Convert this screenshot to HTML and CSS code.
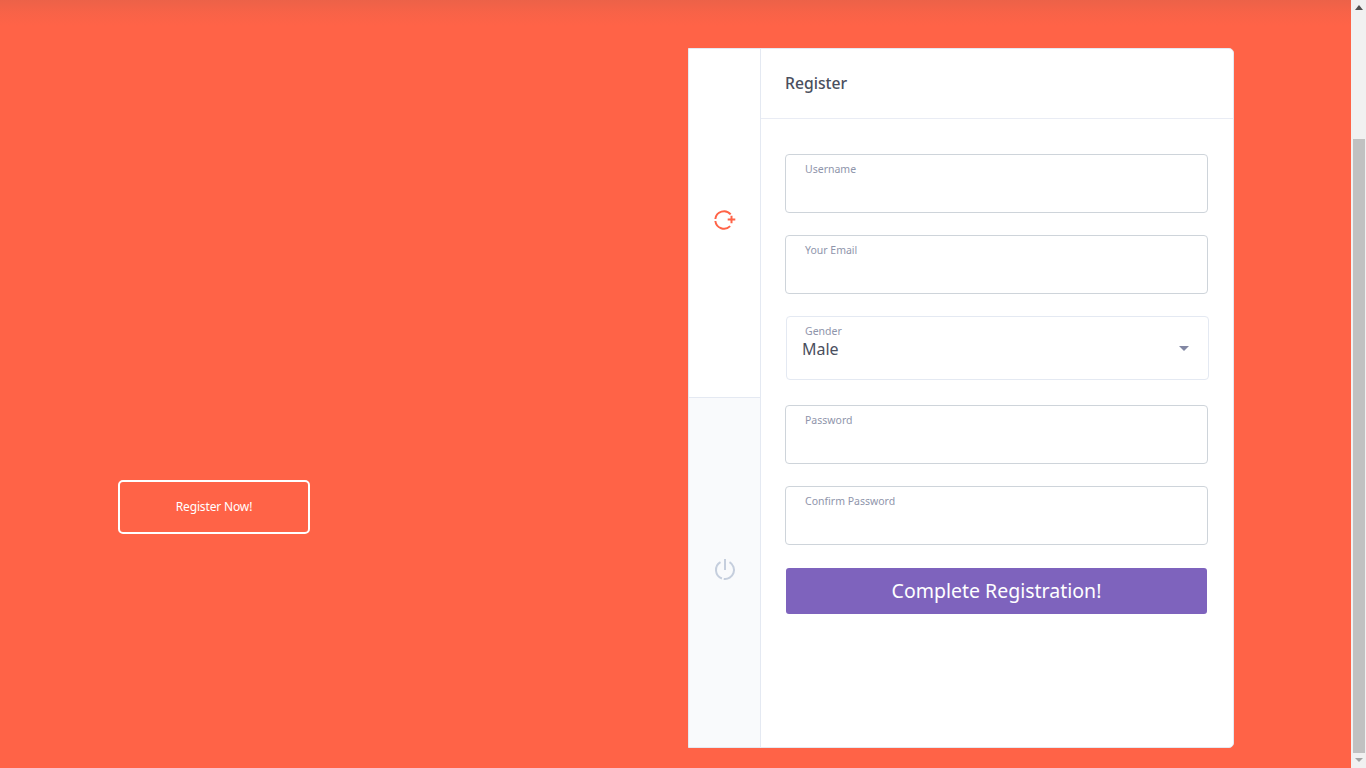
FILE: index.html
```html
<!DOCTYPE html>
<html lang="en">
<head>
    <meta charset="UTF-8">
    <meta name="viewport" content="width=device-width, initial-scale=1.0">
    <title>Register</title>
    <link rel="stylesheet" href="styles.css">
</head>
<body>
    <div class="app">
        <div class="page">
            <div class="top-shadow"></div>
            <div class="intro">
                <button class="btn-outline">Register Now!</button>
            </div>
            <div class="card">
                <div class="tabs">
                    <div class="tab tab-active">
                        <svg width="24" height="24" viewBox="0 0 24 24" fill="none" stroke="#ff6347" stroke-width="2">
                            <path d="M18.66 6.4A8.7 8.7 0 0 0 3.35 11"/>
                            <path d="M3.35 13A8.7 8.7 0 0 0 18.15 18.15"/>
                            <path d="M15.7 11.5h7.6M19.5 7.7v7.6"/>
                        </svg>
                    </div>
                    <div class="tab tab-muted">
                        <svg width="24" height="24" viewBox="0 0 24 24" fill="none" stroke="#c5cedd" stroke-width="2">
                            <path d="M7.5 4.2A9 9 0 0 0 8.92 20.46"/>
                            <path d="M10.75 20.91A9 9 0 0 0 16.5 4.2"/>
                            <path d="M12 1v11"/>
                        </svg>
                    </div>
                </div>
                <div class="panel">
                    <div class="panel-head">Register</div>
                    <form class="form">
                        <div class="field">
                            <label for="username">Username</label>
                            <input type="text" id="username">
                        </div>
                        <div class="field">
                            <label for="email">Your Email</label>
                            <input type="text" id="email">
                        </div>
                        <div class="field field-select">
                            <label for="gender">Gender</label>
                            <select id="gender">
                                <option>Male</option>
                                <option>Female</option>
                            </select>
                            <span class="caret"></span>
                        </div>
                        <div class="field">
                            <label for="password">Password</label>
                            <input type="password" id="password">
                        </div>
                        <div class="field">
                            <label for="confirm">Confirm Password</label>
                            <input type="password" id="confirm">
                        </div>
                        <button type="button" class="btn-submit">Complete Registration!</button>
                    </form>
                </div>
            </div>
        </div>
        <div class="scrollbar">
            <span class="arrow arrow-up"></span>
            <div class="scroll-track"><div class="scroll-thumb"></div></div>
            <span class="arrow arrow-down"></span>
        </div>
    </div>
</body>
</html>
```

FILE: styles.css
```css
* {
    box-sizing: border-box;
}

html, body {
    margin: 0;
    padding: 0;
    height: 100%;
    overflow: hidden;
}

body {
    font-family: "Noto Sans", Arial, sans-serif;
    background-color: #ff6347;
    color: #4a4f5e;
}

.app {
    display: flex;
    height: 100vh;
}

.page {
    position: relative;
    flex: 1;
    display: flex;
    justify-content: space-between;
    padding: 48px 117px 20px 118px;
}

.top-shadow {
    position: absolute;
    top: 0;
    left: 0;
    right: 0;
    height: 26px;
    background: linear-gradient(to bottom, rgba(120, 90, 80, 0.14), rgba(120, 90, 80, 0.05) 50%, rgba(120, 90, 80, 0));
}

.scrollbar {
    width: 15px;
    display: flex;
    flex-direction: column;
    align-items: center;
    background: #f1f1f1;
}

.arrow {
    width: 0;
    height: 0;
    border-left: 4px solid transparent;
    border-right: 4px solid transparent;
}

.arrow-up {
    margin: 5px 0 0;
    border-bottom: 5px solid #505050;
}

.arrow-down {
    margin: 5px 0 6px;
    border-top: 4px solid #a3a3a3;
}

.scroll-track {
    flex: 1;
    width: 100%;
    display: flex;
    flex-direction: column;
    justify-content: flex-end;
    padding: 0 1px 0 2px;
}

.scroll-thumb {
    height: 614px;
    background: #c1c1c1;
}

.intro {
    padding-top: 432px;
}

.btn-outline {
    width: 192px;
    height: 54px;
    padding: 0 0 2px;
    border: 2px solid #fff;
    border-radius: 5px;
    background: transparent;
    color: #fff;
    font-family: inherit;
    font-size: 12px;
    letter-spacing: -0.15px;
    cursor: pointer;
}

.card {
    position: relative;
    display: flex;
    width: 546px;
    height: 700px;
    background: #fff;
    border: 1px solid #e4e9f2;
    border-radius: 0 5px 5px 0;
    overflow: hidden;
}

.tabs {
    display: flex;
    flex-direction: column;
    width: 72px;
    border-right: 1px solid #e4e9f2;
}

.tab {
    display: flex;
    align-items: center;
    justify-content: center;
    background: #fff;
}

.tab-active {
    height: 348px;
}

.tab-active svg {
    margin: 0 1px 6px 0;
}

.tab-muted {
    flex: 1;
    background: #f9fafc;
    border-top: 1px solid #e4e9f2;
}

.tab-muted svg {
    margin: 0 0 5px 1px;
}

.panel {
    flex: 1;
}

.panel-head {
    height: 70px;
    padding: 0 24px 2px;
    display: flex;
    align-items: center;
    border-bottom: 1px solid #e9ecf4;
    font-size: 15.7px;
    font-weight: 500;
}

.form {
    padding: 35px 25px 0 24px;
}

.field {
    position: relative;
    height: 59px;
    margin-bottom: 22px;
    padding: 7px 19px 0;
    border: 1px solid #ced4da;
    border-radius: 4px;
    background: #fff;
}

.field label {
    display: block;
    font-size: 10.5px;
    line-height: 15px;
    color: #8f95ab;
}

.field input {
    display: block;
    width: 100%;
    height: 28px;
    border: none;
    outline: none;
    padding: 0;
    font-family: inherit;
    font-size: 16px;
    color: #4a4f5e;
    background: transparent;
}

.field-select {
    height: 64px;
    margin: 0 -1px 25px 1px;
    border-color: #e4e9f2;
    padding-left: 16px;
}

.field-select label {
    padding-left: 2px;
}

.field-select select {
    display: block;
    width: 100%;
    height: 20px;
    margin: -1px 0 0 -1px;
    border: none;
    outline: none;
    padding: 0;
    appearance: none;
    background: transparent;
    font-family: inherit;
    font-size: 16px;
    color: #4a4f5e;
}

.caret {
    position: absolute;
    top: 29px;
    right: 19px;
    border-left: 5px solid transparent;
    border-right: 5px solid transparent;
    border-top: 5px solid #8287a3;
}

.btn-submit {
    display: block;
    width: 421px;
    height: 46px;
    margin: 23px 0 0 1px;
    padding: 0 0 2px;
    border: none;
    border-radius: 3px;
    background: #7e63bd;
    color: #fff;
    font-family: inherit;
    font-size: 19.5px;
    cursor: pointer;
}
```
